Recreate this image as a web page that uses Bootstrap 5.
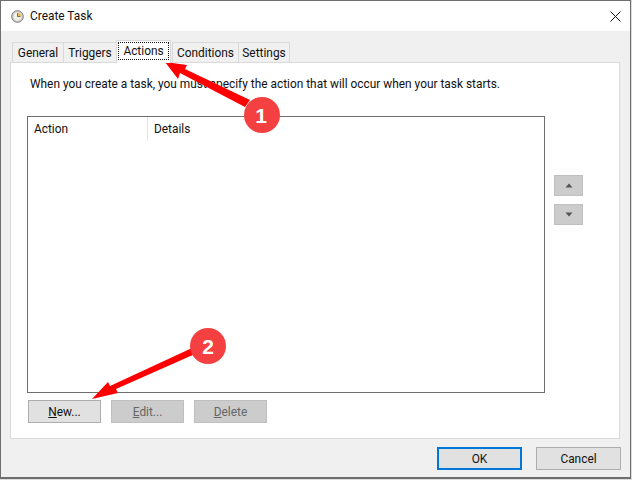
<!DOCTYPE html>
<html lang="en"><head><meta charset="utf-8"><title>Create Task</title>
<link href="https://cdn.jsdelivr.net/npm/bootstrap@5.3.0/dist/css/bootstrap.min.css" rel="stylesheet">
<style>
html,body{margin:0;height:480px;overflow:hidden;background:#dcdcdc}
body{font-family:Roboto,"Noto Sans",sans-serif;font-size:11.9px;color:#111;line-height:16px}
.win{position:relative;width:631px;height:479px;background:#f0f0f0;border:1px solid #6e6e6e;border-bottom-width:2px}
.ttl{height:30px;background:#fff;padding-left:10px;gap:6px}
.ttl-x{margin-left:auto;margin-right:9px;width:11px;height:11px}
.tabbar{padding:10px 0 0 9px;height:31px;align-items:flex-end}
.tb{height:20px;border:1px solid #d9d9d9;border-bottom:0;background:#f0f0f0;padding:0 5px;margin-left:-1px;display:flex;align-items:center;justify-content:center}
.tb.on{background:#fff;padding:0 1px 2px;margin:0 2px -1px -1px;position:relative;z-index:1;height:23px}
.tb.on span{border:1px dotted #111;padding:0 4px;display:block;line-height:16px}
.panel{width:610px;height:377px;margin-left:9px;background:#fff;border:1px solid #d9d9d9;padding:13px 16px 0 16px}
.intro{padding-left:3px}
.lst{width:518px;height:277px;border:1px solid #6e6e6e;margin-top:24px}
.lst-h{height:24px}
.col1{width:120px;padding-left:6px;border-right:1px solid #e5e5e5;height:24px;line-height:24px}
.col2{padding-left:6px;line-height:24px}
.btnw{height:23px;width:73px;border:1px solid #adadad;background:#e1e1e1;color:#111;font-size:11.9px;padding:0;line-height:20px;border-radius:0}
.btnw.off{background:#ccc;border-color:#bfbfbf;color:#666}
.btnw.def{border:2px solid #0078d7;width:85px}
.btnw.wd{width:85px}
.sq{width:29px;height:21px;background:#ccc;border:1px solid #bfbfbf}
.side{margin:24px 0 0 9px;padding-top:59px;gap:8px}
.rowb{padding-top:7px;padding-left:1px;gap:10px}
.foot{padding:8px 9px 0 0;justify-content:flex-end;gap:14px}
.ov{position:absolute;left:-1px;top:-1px;width:632px;height:480px;pointer-events:none}
.num{font:700 21px "Liberation Sans",sans-serif;fill:#fff;text-anchor:middle}
</style></head><body>
<div class="win">
 <div class="ttl d-flex align-items-center">
  <svg width="13" height="13" viewBox="0 0 14 14"><circle cx="7" cy="7" r="6.3" fill="#c4c6c8" stroke="#7b7d80"/><circle cx="7" cy="7" r="4.5" fill="#f4f1e2"/><path d="M7 7V3A4 4 0 0 1 11 7z" fill="#e6bf58"/><path d="M7 3.4V7h3.2" fill="none" stroke="#666"/></svg>
  <span>Create Task</span>
  <svg class="ttl-x" viewBox="0 0 11 11"><path d="M.5.5l10 10M10.5.5l-10 10" stroke="#111" fill="none"/></svg>
 </div>
 <div class="tabbar d-flex">
  <div class="tb" style="margin-left:2px;width:52px">General</div>
  <div class="tb" style="width:54px">Triggers</div>
  <div class="tb on" style="width:55px"><span>Actions</span></div>
  <div class="tb" style="width:67px">Conditions</div>
  <div class="tb" style="width:52px">Settings</div>
 </div>
 <div class="panel">
  <div class="intro">When you create a task, you must specify the action that will occur when your task starts.</div>
  <div class="d-flex">
   <div class="lst">
    <div class="lst-h d-flex"><div class="col1">Action</div><div class="col2">Details</div></div>
   </div>
   <div class="side d-flex flex-column">
    <div class="sq d-flex align-items-center justify-content-center"><svg width="8" height="5" viewBox="0 0 8 5"><path d="M4 0.5L7.5 4.5H.5z" fill="#555"/></svg></div>
    <div class="sq d-flex align-items-center justify-content-center"><svg width="8" height="5" viewBox="0 0 8 5"><path d="M4 4.5L7.5 .5H.5z" fill="#555"/></svg></div>
   </div>
  </div>
  <div class="rowb d-flex">
   <button class="btn btnw"><u>N</u>ew...</button>
   <button class="btn btnw off"><u>E</u>dit...</button>
   <button class="btn btnw off"><u>D</u>elete</button>
  </div>
 </div>
 <div class="foot d-flex">
  <button class="btn btnw def">OK</button>
  <button class="btn btnw wd">Cancel</button>
 </div>
 <svg class="ov" viewBox="0 0 632 480">
  <path d="M165 62L187 65L185 69L250 100L245 107L180 73L178 79z" fill="#f00"/>
  <path d="M92 399L108 382L110 386L192 348L195 354L116 389L118 393z" fill="#f00"/>
  <circle cx="262" cy="115" r="18" fill="#f44040"/>
  <circle cx="208" cy="346" r="18" fill="#f44040"/>
  <text class="num" x="261" y="122.5">1</text>
  <text class="num" x="208" y="354">2</text>
 </svg>
</div>
</body></html>
